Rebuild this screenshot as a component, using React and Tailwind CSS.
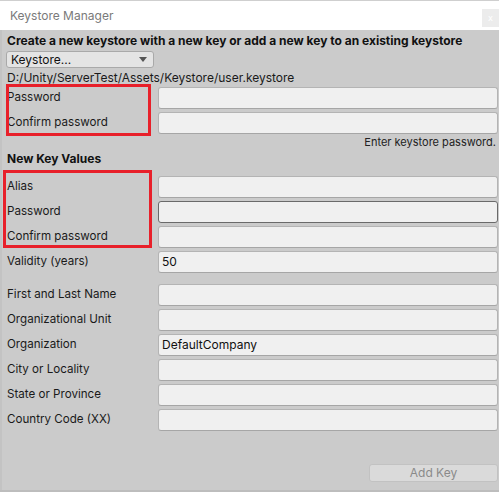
import React from "react";

const Field = ({ value, focused }) => (
  <div
    className={`flex-1 h-[22px] rounded-[3px] border bg-[#f0f0f0] flex items-center px-[3px] text-[12px] text-[#111] ${
      focused ? "border-[#6a6a6a]" : "border-[#b4b4b4] border-b-[#a6a6a6]"
    }`}
  >
    {value}
  </div>
);

const Row = ({ label, value, focused, className = "" }) => (
  <div className={`flex items-center h-[22px] ${className}`}>
    <div className="w-[151px] shrink-0 text-[11.6px] text-[#1a1a1a]">{label}</div>
    <Field value={value} focused={focused} />
  </div>
);

export default function App() {
  const details = [
    { label: "First and Last Name" },
    { label: "Organizational Unit" },
    { label: "Organization", value: "DefaultCompany" },
    { label: "City or Locality" },
    { label: "State or Province" },
    { label: "Country Code (XX)" },
  ];

  return (
    <div
      className="relative w-[499px] h-[492px] overflow-hidden bg-[#cbcbcb] flex flex-col"
      style={{ fontFamily: "Inter, 'Noto Sans', sans-serif" }}
    >
      {/* Title bar */}
      <div className="h-[30px] bg-white border-t border-[#cfcfcf] flex items-center justify-between pl-[10px]">
        <span className="text-[12px] text-[#7a7a7a]">Keystore Manager</span>
        <div className="w-[17px] h-[18px] mt-[4px] bg-[#ececec] flex items-center justify-center text-[9px] text-white leading-none">
          x
        </div>
      </div>

      {/* Body */}
      <div className="flex-1 flex flex-col pl-[7px] pr-[1px] border-l-2 border-[#c3c3c3]">
        <div className="h-[21px] flex items-center -ml-[2px] text-[12px] font-bold text-[#111]">
          Create a new keystore with a new key or add a new key to an existing keystore
        </div>

        <div className="h-[17px] w-[148px] -ml-[3px] rounded-[3px] border border-[#a9a9a9] bg-[#e4e4e4] flex items-center justify-between pl-[4px] pr-[6px] text-[12px] text-[#111]">
          <span>Keystore...</span>
          <svg width="8" height="5" viewBox="0 0 8 5">
            <path d="M0 0 L8 0 L4 5 Z" fill="#555" />
          </svg>
        </div>

        <div className="h-[19px] flex items-center -ml-[2px] text-[12px] text-[#1a1a1a]">
          D:/Unity/ServerTest/Assets/Keystore/user.keystore
        </div>

        <div className="-ml-[2px] flex flex-col gap-[3px]">
          <Row label="Password" />
          <Row label="Confirm password" />
        </div>

        <div className="h-[17px] flex items-center justify-end pr-[2px] text-[11px] text-[#222]">
          Enter keystore password.
        </div>

        <div className="h-[16px] flex items-center -ml-[2px] text-[12px] font-bold text-[#111]">
          New Key Values
        </div>

        <div className="-ml-[2px] mt-[9px] flex flex-col gap-[3px]">
          <Row label="Alias" />
          <Row label="Password" focused />
          <Row label="Confirm password" />
          <Row label="Validity (years)" value="50" />
          <div className="h-[5px]" />
          {details.map((d) => (
            <Row key={d.label} label={d.label} value={d.value} />
          ))}
        </div>

        <div className="flex justify-end mt-[33px]">
          <div className="w-[129px] h-[18px] rounded-[3px] border border-[#c2c2c2] bg-[#dadada] flex items-center justify-center text-[12px] text-[#8a8a8a]">
            Add Key
          </div>
        </div>
      </div>

      <div className="h-[2px] bg-[#bdbdbd]" />

      {/* Annotation boxes */}
      <div className="absolute left-[6px] top-[84px] w-[145px] h-[52px] border-[3px] border-[#e8202a]" />
      <div className="absolute left-[3px] top-[170px] w-[149px] h-[78px] border-[3px] border-[#e8202a]" />
    </div>
  );
}
